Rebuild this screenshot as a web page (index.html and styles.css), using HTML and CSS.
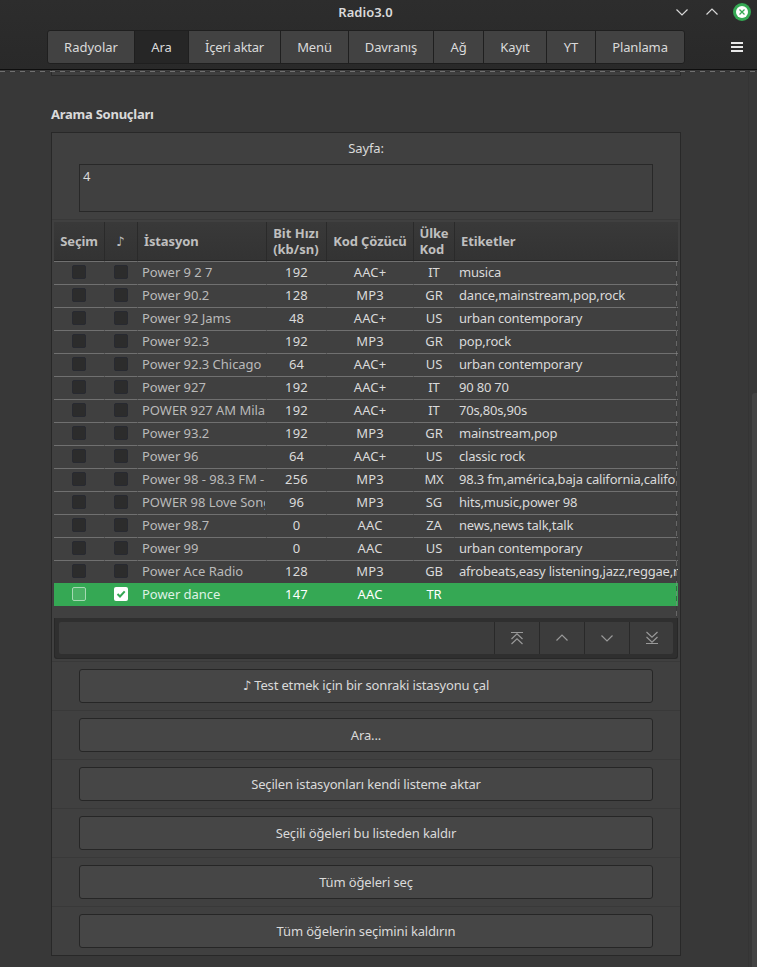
FILE: index.html
```html
<!DOCTYPE html>
<html lang="tr">
<head>
<meta charset="utf-8">
<title>Radio3.0</title>
<link rel="stylesheet" href="styles.css">
</head>
<body>
<header class="header">
  <div class="titlebar">
    <h1 class="title">Radio3.0</h1>
    <div class="controls">
      <svg width="14" height="24" viewBox="0 0 14 24"><path d="M1.5 9.500l5.500 5.500 5.500-5.500" fill="none" stroke="#d8d8d8" stroke-width="1.200"/></svg>
      <svg width="14" height="24" viewBox="0 0 14 24"><path d="M1.500 14.500l5.500-5.500 5.500 5.500" fill="none" stroke="#d8d8d8" stroke-width="1.200"/></svg>
      <svg width="18" height="24" viewBox="0 0 18 24"><circle cx="9" cy="12" r="9" fill="#35a854"/><circle cx="9" cy="12" r="6" fill="#fff"/><path d="M6.500 9.500l5 5m0-5l-5 5" stroke="#35a854" stroke-width="1.300"/></svg>
    </div>
  </div>
  <div class="toolbar">
    <nav class="tabs">
      <span class="tab t1">Radyolar</span><span class="tab t2 active">Ara</span><span class="tab t3">İçeri aktar</span><span class="tab t4">Menü</span><span class="tab t5">Davranış</span><span class="tab t6">Ağ</span><span class="tab t7">Kayıt</span><span class="tab t8">YT</span><span class="tab t9">Planlama</span>
    </nav>
    <div class="burger"><i></i><i></i><i></i></div>
  </div>
</header>
<main class="content">
  <div class="overshoot"></div>
  <div class="prev-panel"></div>
  <h2 class="heading">Arama Sonuçları</h2>
  <section class="panel">
    <div class="page-row">
      <div class="page-label">Sayfa:</div>
      <div class="page-input">4</div>
    </div>
    <div class="table">
      <div class="thead"><span>Seçim</span><span class="note">♪</span><span class="left">İstasyon</span><span class="bit">Bit Hızı<br>(kb/sn)</span><span class="codec">Kod Çözücü</span><span>Ülke<br>Kod</span><span class="left tags">Etiketler</span></div>
      <div class="rows" id="rows"></div>
      <div class="edge"></div>
    </div>
    <div class="actionbar">
      <div class="actions">
        <span class="blank"></span>
        <span class="act"><svg width="14" height="14" viewBox="0 0 14 14"><path d="M1 1.500h12M1.500 8L7 2.800 12.500 8M1.500 13L7 7.800 12.500 13"/></svg></span>
        <span class="act"><svg width="14" height="14" viewBox="0 0 14 14"><path d="M1.500 9.500L7 4l5.500 5.500"/></svg></span>
        <span class="act"><svg width="14" height="14" viewBox="0 0 14 14"><path d="M1.500 4.500L7 10l5.500-5.500"/></svg></span>
        <span class="act"><svg width="14" height="14" viewBox="0 0 14 14"><path d="M1 12.500h12M1.500 1L7 6.200 12.500 1M1.500 6L7 11.200 12.500 6"/></svg></span>
      </div>
    </div>
    <div class="brow"><button class="b1">♪ Test etmek için bir sonraki istasyonu çal</button></div>
    <div class="brow"><button>Ara...</button></div>
    <div class="brow"><button>Seçilen istasyonları kendi listeme aktar</button></div>
    <div class="brow"><button>Seçili öğeleri bu listeden kaldır</button></div>
    <div class="brow"><button>Tüm öğeleri seç</button></div>
    <div class="brow"><button>Tüm öğelerin seçimini kaldırın</button></div>
  </section>
  <div class="scroll"><div class="thumb"></div></div>
</main>
<script src="rows.js"></script>
</body>
</html>
```
FILE: rows.js
```js
const stations = [
  ["Power 9 2 7", 192, "AAC+", "IT", "musica"],
  ["Power 90.2", 128, "MP3", "GR", "dance,mainstream,pop,rock"],
  ["Power 92 Jams", 48, "AAC+", "US", "urban contemporary"],
  ["Power 92.3", 192, "MP3", "GR", "pop,rock"],
  ["Power 92.3 Chicago", 64, "AAC+", "US", "urban contemporary"],
  ["Power 927", 192, "AAC+", "IT", "90 80 70"],
  ["POWER 927 AM Mila", 192, "AAC+", "IT", "70s,80s,90s"],
  ["Power 93.2", 192, "MP3", "GR", "mainstream,pop"],
  ["Power 96", 64, "AAC+", "US", "classic rock"],
  ["Power 98 - 98.3 FM -", 256, "MP3", "MX", "98.3 fm,américa,baja california,califo"],
  ["POWER 98 Love Song", 96, "MP3", "SG", "hits,music,power 98"],
  ["Power 98.7", 0, "AAC", "ZA", "news,news talk,talk"],
  ["Power 99", 0, "AAC", "US", "urban contemporary"],
  ["Power Ace Radio", 128, "MP3", "GB", "afrobeats,easy listening,jazz,reggae,r"],
  ["Power dance", 147, "AAC", "TR", ""]
];
const tick = '<svg width="14" height="14" viewBox="0 0 14 14"><path d="M3.500 7l2.500 2.500L10.700 4.300" fill="none" stroke="#35a854" stroke-width="2"/></svg>';
document.getElementById("rows").innerHTML = stations.map((s, i) => {
  const on = i === stations.length - 1;
  return `<div class="row${on ? " selected" : ""}"><span><i class="check"></i></span><span><i class="check${on ? " on" : ""}">${on ? tick : ""}</i></span><span class="name">${s[0]}</span><span class="rate">${s[1]}</span><span class="rate">${s[2]}</span><span>${s[3]}</span><span class="taglist">${s[4]}</span></div>`;
}).join("");
```
FILE: styles.css
```css
* { box-sizing: border-box; }
body { margin: 0; width: 757px; height: 967px; overflow: hidden; background: #383838; color: #dadada; font: 13px/16px "Noto Sans", "DejaVu Sans", sans-serif; letter-spacing: -0.13px; }
h1, h2 { margin: 0; font-size: 13px; line-height: 16px; font-weight: 600; }
.header { height: 70px; background: linear-gradient(#2d2d2d, #292929); border-bottom: 1px solid #0e0e0e; }
.titlebar { height: 30px; display: grid; grid-template-columns: 1fr auto 1fr; align-items: start; }
.title { grid-column: 2; padding-top: 4px; padding-right: 26px; letter-spacing: 0; }
.controls { display: flex; justify-content: flex-end; gap: 16px; padding-right: 6px; }
.controls svg:nth-child(3) { margin-left: -2px; }
.toolbar { display: flex; align-items: center; justify-content: space-between; padding: 0 14px 0 47px; }
.tabs { display: flex; height: 34px; border: 1px solid #1f1f1f; border-radius: 3px; overflow: hidden; background: #424242; }
.tab { display: flex; align-items: center; justify-content: center; border-right: 1px solid #1f1f1f; white-space: nowrap; }
.tab:last-child { border: 0; }
.active { background: #262626; }
.t1 { width: 87px; letter-spacing: 0; } .t2 { width: 54px; } .t3 { width: 92px; letter-spacing: -0.25px; } .t4 { width: 68px; } .t5 { width: 85px; } .t6 { width: 50px; } .t7 { width: 63px; } .t8 { width: 49px; } .t9 { width: 88px; }
.burger { display: grid; gap: 2px; width: 12px; }
.burger i { height: 2px; background: #e8e8e8; }
.content { position: relative; height: 897px; padding-left: 51px; }
.overshoot { position: absolute; left: 0; right: 0; top: 1px; height: 1px; background: repeating-linear-gradient(90deg, #707070 0 5px, #333 5px 10px); }
.prev-panel { width: 630px; height: 6px; border: 1px solid #2a2a2a; border-top: 0; background: #3f3f3f; }
.heading { margin-top: 30px; height: 26px; font-weight: 700; letter-spacing: -0.25px; }
.panel { width: 630px; height: 824px; border: 1px solid #282828; background: #404040; }
.page-row { height: 87px; padding: 7px 27px 0; border-bottom: 1px solid #393939; }
.page-label { text-align: center; height: 24px; }
.page-input { height: 48px; border: 1px solid #282828; padding: 3px 3px; }
.table { position: relative; width: 624px; height: 396px; margin: 2px 0 0 2px; }
.thead { display: grid; grid-template-columns: 51px 33px 129px 60px 87px 41px 223px; height: 39px; background: linear-gradient(#393939, #333); border-bottom: 1px solid #282828; font-weight: 700; color: #bfbfbf; }
.thead span { display: flex; align-items: center; justify-content: center; border-right: 1px solid #2a2a2a; }
.thead span:last-child { border: 0; }
.thead .left { justify-content: flex-start; padding-left: 6px; }
.thead .bit { letter-spacing: 0; padding-right: 1px; }
.thead .note { padding-right: 2px; }
.row { display: grid; grid-template-columns: 51px 33px 129px 60px 87px 41px 223px; height: 23px; line-height: 22px; background: linear-gradient(#707070, #707070) 0 0 / 100% 1px no-repeat; }
.row span { overflow: hidden; white-space: nowrap; text-align: center; display: flex; justify-content: center; border-right: 1px solid transparent; background: linear-gradient(#565656, #565656) 100% 0 / 1px 1px no-repeat border-box; }
.row .name, .row .taglist { display: block; text-align: left; padding-left: 4px; }
.row .name { color: #bababa; border-right-width: 2px; letter-spacing: -0.03px; }
.row .rate { letter-spacing: 0.15px; }
.row .taglist { border: 0; background: none; letter-spacing: -0.2px; }
.selected { background: #35a854; color: #fff; }
.row.selected span { background: none; }
.selected .name { color: #dff2e4; }
.check { width: 14px; height: 14px; margin-top: 4px; border-radius: 2px; background: #2c2c2c; border: 1px solid #282a31; }
.selected .check { background: #4bb266; border-color: #a6d9b3; }
.selected .check.on { background: #fff; border: 0; }
.check svg { display: block; }
.edge { position: absolute; left: 622px; top: 39px; width: 1px; height: 357px; background: repeating-linear-gradient(#8888 0 5px, #3338 5px 10px); }
.actionbar { width: 624px; height: 41px; margin-left: 2px; padding: 4px 4px; background: #2f2f2f; border: 1px solid #282828; border-top: 0; border-radius: 0 0 3px 3px; }
.actions { display: flex; height: 32px; background: #3c3c3c; border-radius: 2px; }
.blank { flex: 1; }
.act { width: 45px; border-left: 1px solid #292929; display: flex; align-items: center; justify-content: center; }
.act:last-child { width: 44px; }
.act svg { fill: none; stroke: #999; stroke-width: 1.2; }
.brow { height: 49px; padding: 7px 27px 0; border-top: 1px solid #393939; }
.actionbar + .brow { margin-top: 2px; }
button { display: block; width: 100%; height: 34px; padding: 0; border: 1px solid #262626; border-radius: 3px; background: #464646; color: inherit; font: inherit; letter-spacing: -0.15px; }
.b1 { padding-bottom: 2px; }
.scroll { position: absolute; right: 0; top: 0; bottom: 0; width: 9px; border-left: 1px solid #343434; }
.thumb { position: absolute; right: 0; top: 323px; bottom: 0; width: 5px; border-radius: 3px 0 0; background: #444; }
```
